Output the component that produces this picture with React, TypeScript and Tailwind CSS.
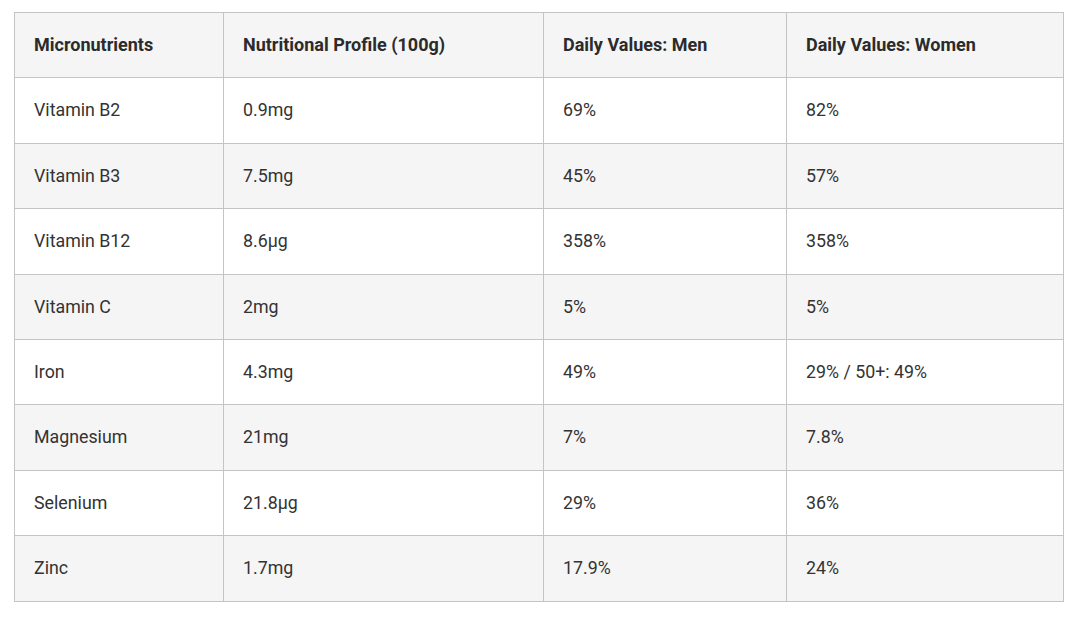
const rows = [
  ['Vitamin B2', '0.9mg', '69%', '82%'],
  ['Vitamin B3', '7.5mg', '45%', '57%'],
  ['Vitamin B12', '8.6µg', '358%', '358%'],
  ['Vitamin C', '2mg', '5%', '5%'],
  ['Iron', '4.3mg', '49%', '29% / 50+: 49%'],
  ['Magnesium', '21mg', '7%', '7.8%'],
  ['Selenium', '21.8µg', '29%', '36%'],
  ['Zinc', '1.7mg', '17.9%', '24%'],
];

const headers = ['Micronutrients', 'Nutritional Profile (100g)', 'Daily Values: Men', 'Daily Values: Women'];

export default function App() {
  return (
    <div className="min-h-screen bg-white pt-3 pl-[14px] font-['Roboto',sans-serif] text-[17.8px] text-[#333]">
      <table className="w-[1049px] border-collapse table-fixed">
        <colgroup>
          <col className="w-[209px]" />
          <col className="w-[320px]" />
          <col className="w-[243px]" />
          <col className="w-[277px]" />
        </colgroup>
        <thead>
          <tr className="bg-[#f5f5f5]">
            {headers.map((h) => (
              <th
                key={h}
                className="border border-[#c4c4c4] px-[19px] py-5 text-left text-[18px] font-bold leading-[24.4px] text-[#2b2b2b]"
              >
                {h}
              </th>
            ))}
          </tr>
        </thead>
        <tbody>
          {rows.map((r, i) => (
            <tr key={r[0]} className={i % 2 === 0 ? 'bg-white' : 'bg-[#f5f5f5]'}>
              {r.map((c, j) => (
                <td key={j} className="border border-[#c4c4c4] px-[19px] py-5 leading-[24.4px]">
                  {c}
                </td>
              ))}
            </tr>
          ))}
        </tbody>
      </table>
    </div>
  );
}
